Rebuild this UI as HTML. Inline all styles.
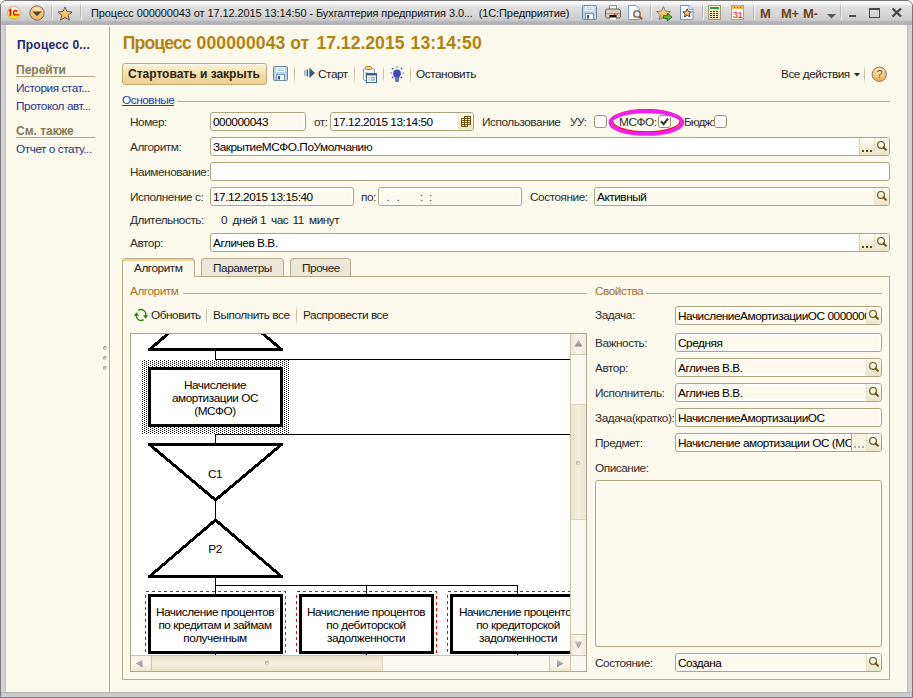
<!DOCTYPE html><html><head><meta charset="utf-8"><style>
*{margin:0;padding:0;box-sizing:border-box}
body{width:913px;height:698px;overflow:hidden;background:#fff;font-family:"Liberation Sans",sans-serif;font-size:11.8px;letter-spacing:-0.45px;color:#222;position:relative}
.a{position:absolute}
.t{position:absolute;white-space:pre;line-height:0;height:0}
.t span{display:inline-block;line-height:normal;transform:translateY(-0.905em) translateY(-0.5px)}
.f{position:absolute;border:1px solid #ada57e;border-radius:3px;background:#fff;height:19px;overflow:hidden}
.ro{background:#fbf9ec}
.fb{position:absolute;top:0;bottom:0;width:15px;background:linear-gradient(#fefdf6,#f4f0de 50%,#ebe5cb);border-left:1px solid #e6e0c6}
.sep{position:absolute;width:1px;background:linear-gradient(rgba(190,182,150,0),#c8c0a0 30%,#c8c0a0 70%,rgba(190,182,150,0))}
.cb{position:absolute;width:13px;height:13px;border:1px solid #9c9472;border-radius:3px;background:#fff}
</style></head><body><div style="position:absolute;left:0px;top:0px;width:913px;height:698px;background:#c9c9c9;border:1px solid #777;border-radius:6px 6px 0 0"></div><div style="position:absolute;left:1px;top:1px;width:911px;height:24px;background:linear-gradient(#fbfbfb,#f4f4f4 3px,#dfdfdf 6px,#d8d8d8 50%,#cbcbcb 80%,#b6b6ba 86%,#aeaeb2);border-radius:5px 5px 0 0"></div><div style="position:absolute;left:1px;top:25px;width:5px;height:667px;background:linear-gradient(90deg,#d9d9d9,#cfcfcf 70%,#b9b9b9)"></div><div style="position:absolute;left:907px;top:25px;width:5px;height:667px;background:linear-gradient(90deg,#b3b3b3,#cfcfcf 30%,#d6d6d6)"></div><div style="position:absolute;left:1px;top:692px;width:911px;height:5px;background:linear-gradient(#b3b3b3,#c9c9c9 40%,#d3d3d3)"></div><div style="position:absolute;left:6px;top:25px;width:901px;height:667px;background:#fbf9ec"></div><div class="t" style="left:91px;top:17px;font-size:11px;color:#111;letter-spacing:-0.1px"><span>Процесс 000000043 от 17.12.2015 13:14:50 - Бухгалтерия предприятия 3.0...  (1С:Предприятие)</span></div><div class="t" style="left:17px;top:49px;font-weight:bold;font-size:12px;letter-spacing:0.2px;color:#1c2472"><span>Процесс 0...</span></div><div class="t" style="left:16px;top:74px;font-weight:bold;font-size:12px;letter-spacing:0;color:#857a58"><span>Перейти</span></div><div style="position:absolute;left:16px;top:76px;width:79px;height:1px;background:#aea57f"></div><div class="t" style="left:16px;top:92px;color:#28348a"><span>История стат...</span></div><div class="t" style="left:16px;top:110px;color:#28348a"><span>Протокол авт...</span></div><div class="t" style="left:16px;top:135px;font-weight:bold;font-size:12px;letter-spacing:0;color:#857a58"><span>См. также</span></div><div style="position:absolute;left:16px;top:137px;width:79px;height:1px;background:#aea57f"></div><div class="t" style="left:16px;top:152.5px;color:#28348a"><span>Отчет о стату...</span></div><div style="position:absolute;left:109px;top:27px;width:1px;height:665px;background:#b5ad8a"></div><div style="position:absolute;left:103px;top:346px;width:4px;height:4px;border-radius:50%;background:radial-gradient(circle at 65% 65%,#f6f3e4 0,#c9c2a4 35%,#8f8866 75%)"></div><div style="position:absolute;left:103px;top:356px;width:4px;height:4px;border-radius:50%;background:radial-gradient(circle at 65% 65%,#f6f3e4 0,#c9c2a4 35%,#8f8866 75%)"></div><div style="position:absolute;left:103px;top:366px;width:4px;height:4px;border-radius:50%;background:radial-gradient(circle at 65% 65%,#f6f3e4 0,#c9c2a4 35%,#8f8866 75%)"></div><div class="t" style="left:122.7px;top:49px;font-weight:bold;font-size:17.6px;letter-spacing:-0.85px;color:#b3820e"><span>Процесс</span></div><div class="t" style="left:196.5px;top:49px;font-weight:bold;font-size:17.6px;letter-spacing:0.1px;color:#b3820e"><span>000000043</span></div><div class="t" style="left:290.2px;top:49px;font-weight:bold;font-size:17.6px;letter-spacing:0px;color:#b3820e"><span>от</span></div><div class="t" style="left:316.4px;top:49px;font-weight:bold;font-size:17.6px;letter-spacing:0px;color:#b3820e"><span>17.12.2015</span></div><div class="t" style="left:410.6px;top:49px;font-weight:bold;font-size:17.6px;letter-spacing:0.1px;color:#b3820e"><span>13:14:50</span></div><div style="position:absolute;left:122px;top:63px;width:145px;height:22px;border:1px solid #c9a86a;border-radius:3px;background:linear-gradient(#fdf3d8,#f3dfae 50%,#ecd095);box-shadow:inset 0 1px 0 #fffaf0"></div><div class="t" style="left:128px;top:78px;font-weight:bold;font-size:12px;letter-spacing:0;color:#2b2210"><span>Стартовать и закрыть</span></div><div class="t" style="left:318px;top:78px;color:#222"><span>Старт</span></div><div class="t" style="left:416px;top:78px;color:#222"><span>Остановить</span></div><div class="t" style="left:781px;top:78px;color:#222"><span>Все действия</span></div><div class="sep" style="left:294px;top:65px;height:18px"></div><div class="sep" style="left:354px;top:65px;height:18px"></div><div class="sep" style="left:383px;top:65px;height:18px"></div><div class="sep" style="left:410px;top:65px;height:18px"></div><div class="sep" style="left:864px;top:65px;height:18px"></div><div class="t" style="left:122px;top:104px;color:#2535b0"><span>Основные</span></div><div style="position:absolute;left:122px;top:105px;width:52px;height:1px;background:#2535b0"></div><div style="position:absolute;left:177px;top:101px;width:713px;height:1px;background:#b5ad8a"></div><div class="t" style="left:130px;top:126px;color:#2c2c2c"><span>Номер:</span></div><div class="f ro" style="left:210px;top:112px;width:96px;height:19px;box-shadow:inset 0 0 0 1px #fff,inset 0 0 0 2px rgba(255,255,255,.55);"><div class="t" style="left:2px;top:13px;color:#000;"><span>000000043</span></div></div><div class="t" style="left:314px;top:126px;color:#2c2c2c"><span>от:</span></div><div class="f" style="left:330px;top:112px;width:144px;height:19px;"><div class="t" style="left:2px;top:13px;color:#000;"><span>17.12.2015 13:14:50</span></div><div class="fb" style="left:127px"><svg class="a" style="left:2px;top:3px;" width="10" height="11" viewBox="0 0 10 11"><path d="M3 0 H10 V9 H7 V11 H0 V2 H3 Z" fill="#6e5010"/><rect x="4" y="1" width="2" height="1" fill="#fff"/><rect x="7" y="1" width="2" height="1" fill="#fff"/><rect x="1" y="3" width="2" height="1" fill="#fff"/><rect x="4" y="3" width="2" height="1" fill="#fff"/><rect x="7" y="3" width="2" height="1" fill="#fff"/><rect x="1" y="5" width="2" height="1" fill="#fff"/><rect x="4" y="5" width="2" height="1" fill="#fff"/><rect x="7" y="5" width="2" height="1" fill="#fff"/><rect x="1" y="7" width="2" height="1" fill="#fff"/><rect x="4" y="7" width="2" height="1" fill="#fff"/><rect x="7" y="7" width="2" height="1" fill="#fff"/><rect x="1" y="9" width="2" height="1" fill="#fff"/><rect x="4" y="9" width="2" height="1" fill="#fff"/></svg></div></div><div class="t" style="left:482px;top:126px;color:#2c2c2c"><span>Использование</span></div><div class="t" style="left:570px;top:126px;color:#2c2c2c"><span>УУ:</span></div><div class="cb" style="left:594px;top:115px"></div><div class="t" style="left:619px;top:126px;color:#2c2c2c"><span>МСФО:</span></div><div class="cb" style="left:658px;top:115px"></div><svg class="a" style="left:658px;top:115px;" width="13" height="13" viewBox="0 0 13 13"><path d="M3 6.3 L5.6 9.2 L10 3.6" fill="none" stroke="#333" stroke-width="2.1"/></svg><div class="t" style="left:684px;top:126px;color:#2c2c2c;letter-spacing:-0.9px"><span>Бюдж:</span></div><div class="cb" style="left:714px;top:115px"></div><svg class="a" style="left:606px;top:106px;" width="82" height="32" viewBox="0 0 82 32"><ellipse cx="40.4" cy="14.8" rx="33.9" ry="11.2" fill="none" stroke="#ff0000" stroke-width="1.4"/><ellipse cx="40.4" cy="16.6" rx="36" ry="11.3" fill="none" stroke="#ee20ee" stroke-width="3.9"/></svg><div class="t" style="left:130px;top:151px;color:#2c2c2c"><span>Алгоритм:</span></div><div class="f" style="left:210px;top:137px;width:680px;height:19px;"><div class="t" style="left:2px;top:13px;color:#000;"><span>ЗакрытиеМСФО.ПоУмолчанию</span></div><div class="fb" style="left:663px"><svg class="a" style="left:-1px;top:0px;" width="15" height="17" viewBox="0 0 15 17"><circle cx="7" cy="6.9" r="3.4" fill="none" stroke="#6a5212" stroke-width="1.15"/><path d="M9.5 9.4 L11.9 11.8" stroke="#6a5212" stroke-width="2" stroke-linecap="round"/></svg></div><div class="fb" style="left:648px;border-left-color:#d6cfad"><svg class="a" style="left:-1px;top:0px;" width="15" height="17" viewBox="0 0 15 17"><rect x="3" y="12" width="2" height="2" fill="#5a4412"/><rect x="7" y="12" width="2" height="2" fill="#5a4412"/><rect x="11" y="12" width="2" height="2" fill="#5a4412"/></svg></div></div><div class="t" style="left:130px;top:176px;color:#2c2c2c"><span>Наименование:</span></div><div class="f" style="left:210px;top:162px;width:680px;height:19px;"></div><div class="t" style="left:130px;top:201px;color:#2c2c2c"><span>Исполнение с:</span></div><div class="f ro" style="left:210px;top:187px;width:144px;height:19px;box-shadow:inset 0 0 0 1px #fff,inset 0 0 0 2px rgba(255,255,255,.55);"><div class="t" style="left:2px;top:13px;color:#000;"><span>17.12.2015 13:15:40</span></div></div><div class="t" style="left:361px;top:201px;color:#2c2c2c"><span>по:</span></div><div class="f ro" style="left:378px;top:187px;width:144px;height:19px;box-shadow:inset 0 0 0 1px #fff,inset 0 0 0 2px rgba(255,255,255,.55);"></div><div class="t" style="left:386.5px;top:201px;color:#444"><span>.</span></div><div class="t" style="left:396.5px;top:201px;color:#444"><span>.</span></div><div class="t" style="left:420px;top:201px;color:#444"><span>:</span></div><div class="t" style="left:429px;top:201px;color:#444"><span>:</span></div><div class="t" style="left:530px;top:201px;color:#2c2c2c"><span>Состояние:</span></div><div class="f ro" style="left:594px;top:187px;width:296px;height:19px;box-shadow:inset 0 0 0 1px #fff,inset 0 0 0 2px rgba(255,255,255,.55);"><div class="t" style="left:2px;top:13px;color:#000;"><span>Активный</span></div><div class="fb" style="left:279px"><svg class="a" style="left:-1px;top:0px;" width="15" height="17" viewBox="0 0 15 17"><circle cx="7" cy="6.9" r="3.4" fill="none" stroke="#6a5212" stroke-width="1.15"/><path d="M9.5 9.4 L11.9 11.8" stroke="#6a5212" stroke-width="2" stroke-linecap="round"/></svg></div></div><div class="t" style="left:130px;top:224px;color:#2c2c2c"><span>Длительность:</span></div><div class="t" style="left:221px;top:224px;color:#222"><span>0</span></div><div class="t" style="left:232.5px;top:224px;color:#222"><span>дней</span></div><div class="t" style="left:260px;top:224px;color:#222"><span>1</span></div><div class="t" style="left:271px;top:224px;color:#222"><span>час</span></div><div class="t" style="left:292.5px;top:224px;color:#222"><span>11</span></div><div class="t" style="left:309px;top:224px;color:#222"><span>минут</span></div><div class="t" style="left:130px;top:247px;color:#2c2c2c"><span>Автор:</span></div><div class="f" style="left:210px;top:233px;width:680px;height:19px;"><div class="t" style="left:2px;top:13px;color:#000;"><span>Агличев В.В.</span></div><div class="fb" style="left:663px"><svg class="a" style="left:-1px;top:0px;" width="15" height="17" viewBox="0 0 15 17"><circle cx="7" cy="6.9" r="3.4" fill="none" stroke="#6a5212" stroke-width="1.15"/><path d="M9.5 9.4 L11.9 11.8" stroke="#6a5212" stroke-width="2" stroke-linecap="round"/></svg></div><div class="fb" style="left:648px;border-left-color:#d6cfad"><svg class="a" style="left:-1px;top:0px;" width="15" height="17" viewBox="0 0 15 17"><rect x="3" y="12" width="2" height="2" fill="#5a4412"/><rect x="7" y="12" width="2" height="2" fill="#5a4412"/><rect x="11" y="12" width="2" height="2" fill="#5a4412"/></svg></div></div><div style="position:absolute;left:122px;top:276px;width:768px;height:404px;border:1px solid #b5ad8a;background:#fbf9ec"></div><div style="position:absolute;left:201px;top:258px;width:83px;height:18px;border:1px solid #b5ad8a;border-bottom:none;border-radius:4px 4px 0 0;background:#ebe8da"></div><div style="position:absolute;left:290px;top:258px;width:61px;height:18px;border:1px solid #b5ad8a;border-bottom:none;border-radius:4px 4px 0 0;background:#ebe8da"></div><div style="position:absolute;left:122px;top:258px;width:73px;height:19px;border:1px solid #b5ad8a;border-bottom:none;border-radius:4px 4px 0 0;background:#fbf9ec;box-shadow:inset 0 2px 0 #f9d190"></div><div class="t" style="left:134px;top:271.5px;color:#222"><span>Алгоритм</span></div><div class="t" style="left:213px;top:271.5px;color:#222"><span>Параметры</span></div><div class="t" style="left:302px;top:271.5px;color:#222"><span>Прочее</span></div><div class="t" style="left:130px;top:294.5px;color:#a8722a"><span>Алгоритм</span></div><div style="position:absolute;left:183px;top:293px;width:404px;height:1px;background:#b5ad8a"></div><div class="t" style="left:595px;top:294.5px;color:#a8722a"><span>Свойства</span></div><div style="position:absolute;left:646px;top:293px;width:236px;height:1px;background:#b5ad8a"></div><svg class="a" style="left:132px;top:308px;" width="17" height="14" viewBox="0 0 17 14"><g fill="none" stroke="#2e7d12" stroke-width="1.4"><path d="M6.4 2.6 A4.6 4.6 0 0 1 13.6 7.6"/><path d="M4.4 7.2 A4.6 4.6 0 0 0 11.6 11.6"/></g><path d="M10.9 7.2 L16.3 7.2 L13.6 10.8 Z" fill="#2e7d12"/><path d="M1.7 7.8 L7.1 7.8 L4.4 4.2 Z" fill="#2e7d12"/></svg><div class="t" style="left:151px;top:318.5px;color:#222"><span>Обновить</span></div><div class="t" style="left:213px;top:318.5px;color:#222"><span>Выполнить все</span></div><div class="t" style="left:303px;top:318.5px;color:#222"><span>Распровести все</span></div><div class="sep" style="left:206px;top:306px;height:18px"></div><div class="sep" style="left:296px;top:306px;height:18px"></div><div style="position:absolute;left:130px;top:333px;width:457px;height:339px;border:1px solid #aca68a;background:#fff"></div><svg class="a" style="left:131px;top:334px" width="439" height="321" viewBox="0 0 439 321" shape-rendering="crispEdges"><defs><pattern id="dith" width="4" height="2" patternUnits="userSpaceOnUse"><rect width="4" height="2" fill="#fff"/><rect x="1" y="0" width="1" height="1" fill="#000"/><rect x="3" y="1" width="1" height="1" fill="#000"/></pattern></defs><rect x="17" y="14" width="135" height="3" fill="#000"/><path d="M18.5 15.5 L84.5 -40.5" fill="none" stroke="#000" stroke-width="3" stroke-linejoin="miter" stroke-miterlimit="4"/><path d="M150.5 15.5 L84.5 -40.5" fill="none" stroke="#000" stroke-width="3" stroke-linejoin="miter" stroke-miterlimit="4"/><rect x="84" y="17" width="1" height="8" fill="#000"/><rect x="84" y="25" width="356" height="1" fill="#000"/><rect x="11" y="26" width="147" height="74" fill="url(#dith)"/><rect x="17" y="33" width="135" height="60" fill="#000"/><rect x="20" y="36" width="129" height="54" fill="#fff"/><rect x="84" y="100" width="356" height="1" fill="#000"/><rect x="84" y="100" width="1" height="9" fill="#000"/><rect x="17" y="109" width="135" height="3" fill="#000"/><path d="M18.5 110.5 L84.5 166 L150.5 110.5" fill="none" stroke="#000" stroke-width="3" stroke-linejoin="miter" stroke-miterlimit="4"/><rect x="84" y="168" width="1" height="16" fill="#000"/><rect x="17" y="241" width="135" height="3" fill="#000"/><path d="M18.5 242.5 L84.5 186 L150.5 242.5" fill="none" stroke="#000" stroke-width="3" stroke-linejoin="miter" stroke-miterlimit="4"/><rect x="84" y="244" width="1" height="16" fill="#000"/><rect x="84" y="251" width="303" height="1" fill="#000"/><rect x="84" y="251" width="1" height="9" fill="#000"/><rect x="14.5" y="257.5" width="140" height="70" fill="none" stroke="#ff0000" stroke-width="1" stroke-dasharray="3 3"/><rect x="17" y="260" width="135" height="60" fill="#000"/><rect x="20" y="263" width="129" height="54" fill="#fff"/><rect x="84" y="320" width="1" height="6" fill="#000"/><rect x="235" y="251" width="1" height="9" fill="#000"/><rect x="165.5" y="257.5" width="140" height="70" fill="none" stroke="#ff0000" stroke-width="1" stroke-dasharray="3 3"/><rect x="168" y="260" width="135" height="60" fill="#000"/><rect x="171" y="263" width="129" height="54" fill="#fff"/><rect x="235" y="320" width="1" height="6" fill="#000"/><rect x="386" y="251" width="1" height="9" fill="#000"/><rect x="316.5" y="257.5" width="140" height="70" fill="none" stroke="#ff0000" stroke-width="1" stroke-dasharray="3 3"/><rect x="319" y="260" width="135" height="60" fill="#000"/><rect x="322" y="263" width="129" height="54" fill="#fff"/><rect x="386" y="320" width="1" height="6" fill="#000"/></svg><div class="t" style="left:115px;top:389px;width:200px;text-align:center;color:#000"><span>Начисление</span></div><div class="t" style="left:115px;top:402px;width:200px;text-align:center;color:#000"><span>амортизации ОС</span></div><div class="t" style="left:115px;top:415px;width:200px;text-align:center;color:#000"><span>(МСФО)</span></div><div class="t" style="left:115px;top:478px;width:200px;text-align:center;color:#000"><span>С1</span></div><div class="t" style="left:115px;top:552.5px;width:200px;text-align:center;color:#000"><span>Р2</span></div><div class="t" style="left:115px;top:616px;width:200px;text-align:center;color:#000"><span>Начисление процентов</span></div><div class="t" style="left:115px;top:629px;width:200px;text-align:center;color:#000"><span>по кредитам и займам</span></div><div class="t" style="left:115px;top:642px;width:200px;text-align:center;color:#000"><span>полученным</span></div><div class="t" style="left:266px;top:616px;width:200px;text-align:center;color:#000"><span>Начисление процентов</span></div><div class="t" style="left:266px;top:629px;width:200px;text-align:center;color:#000"><span>по дебиторской</span></div><div class="t" style="left:266px;top:642px;width:200px;text-align:center;color:#000"><span>задолженности</span></div><div class="a" style="left:131px;top:590px;width:439px;height:65px;overflow:hidden"><div class="t" style="left:287px;top:26px;width:200px;text-align:center;color:#000"><span>Начисление процентов</span></div><div class="t" style="left:287px;top:39px;width:200px;text-align:center;color:#000"><span>по кредиторской</span></div><div class="t" style="left:287px;top:52px;width:200px;text-align:center;color:#000"><span>задолженности</span></div></div><div style="position:absolute;left:570px;top:334px;width:16px;height:321px;background:#f9f8f1;border-left:1px solid #cdc6a6"></div><div style="position:absolute;left:570px;top:334px;width:16px;height:21px;background:linear-gradient(90deg,#eee9d6,#f8f6ec 55%,#efead6);border-left:1px solid #cdc6a6;border-bottom:1px solid #cdc6a6"></div><svg class="a" style="left:574px;top:339px;" width="9" height="8" viewBox="0 0 9 8"><defs><linearGradient id="gar" x1="0" y1="0" x2="0" y2="1"><stop offset="0" stop-color="#c4c4c0"/><stop offset="1" stop-color="#8c8c88"/></linearGradient></defs><path d="M0.5 7.5 L4.5 0.5 L8.5 7.5 Z" fill="url(#gar)"/></svg><div style="position:absolute;left:570px;top:404px;width:16px;height:116px;background:linear-gradient(90deg,#e8e2c6,#f2eedc 50%,#ebe6ce);border-left:1px solid #cdc6a6;border-top:1px solid #ddd6bc;border-bottom:1px solid #ddd6bc"></div><div style="position:absolute;left:576px;top:461px;width:4px;height:4px;border-radius:50%;background:radial-gradient(circle at 60% 60%,#fff 0,#c8c2ac 40%,#9c9680 80%)"></div><div style="position:absolute;left:570px;top:634px;width:16px;height:21px;background:linear-gradient(90deg,#eee9d6,#f8f6ec 55%,#efead6);border-left:1px solid #cdc6a6;border-top:1px solid #cdc6a6"></div><svg class="a" style="left:574px;top:641px;" width="9" height="8" viewBox="0 0 9 8"><path d="M0.5 0.5 L4.5 7.5 L8.5 0.5 Z" fill="url(#gar)"/></svg><div style="position:absolute;left:131px;top:655px;width:439px;height:16px;background:#f9f8f1;border-top:1px solid #cdc6a6"></div><div style="position:absolute;left:131px;top:655px;width:21px;height:16px;background:linear-gradient(#f6f3e6,#f9f7ee 50%,#ece7d2);border-top:1px solid #cdc6a6;border-right:1px solid #cdc6a6"></div><svg class="a" style="left:135px;top:659px;" width="9" height="9" viewBox="0 0 9 9"><path d="M7.5 0.5 L0.8 4.5 L7.5 8.5 Z" fill="url(#gar)"/></svg><div style="position:absolute;left:152px;top:655px;width:231px;height:16px;background:linear-gradient(#e9e3c8,#f2eedc 50%,#eae4ca);border-top:1px solid #cdc6a6;border-right:1px solid #ddd6bc"></div><div style="position:absolute;left:265px;top:661px;width:4px;height:4px;border-radius:50%;background:radial-gradient(circle at 60% 60%,#fff 0,#c8c2ac 40%,#9c9680 80%)"></div><div style="position:absolute;left:549px;top:655px;width:21px;height:16px;background:linear-gradient(#f6f3e6,#f9f7ee 50%,#ece7d2);border-top:1px solid #cdc6a6;border-left:1px solid #cdc6a6"></div><svg class="a" style="left:556px;top:659px;" width="9" height="9" viewBox="0 0 9 9"><path d="M1 0.5 L7.7 4.5 L1 8.5 Z" fill="url(#gar)"/></svg><div style="position:absolute;left:570px;top:655px;width:16px;height:16px;background:#f8f7f0;border-top:1px solid #cdc6a6;border-left:1px solid #cdc6a6"></div><div class="t" style="left:595px;top:319px;color:#2c2c2c"><span>Задача:</span></div><div class="f ro" style="left:675px;top:306px;width:207px;height:19px;box-shadow:inset 0 0 0 1px #fff,inset 0 0 0 2px rgba(255,255,255,.55);"><div class="t" style="left:2px;top:13px;color:#000;"><span>НачислениеАмортизацииОС 000000001</span></div><div class="fb" style="left:190px"><svg class="a" style="left:-1px;top:0px;" width="15" height="17" viewBox="0 0 15 17"><circle cx="7" cy="6.9" r="3.4" fill="none" stroke="#6a5212" stroke-width="1.15"/><path d="M9.5 9.4 L11.9 11.8" stroke="#6a5212" stroke-width="2" stroke-linecap="round"/></svg></div></div><div class="t" style="left:595px;top:347px;color:#2c2c2c"><span>Важность:</span></div><div class="f ro" style="left:675px;top:333px;width:207px;height:19px;box-shadow:inset 0 0 0 1px #fff,inset 0 0 0 2px rgba(255,255,255,.55);"><div class="t" style="left:2px;top:13px;color:#000;"><span>Средняя</span></div></div><div class="t" style="left:595px;top:372px;color:#2c2c2c"><span>Автор:</span></div><div class="f ro" style="left:675px;top:358px;width:207px;height:19px;box-shadow:inset 0 0 0 1px #fff,inset 0 0 0 2px rgba(255,255,255,.55);"><div class="t" style="left:2px;top:13px;color:#000;"><span>Агличев В.В.</span></div><div class="fb" style="left:190px"><svg class="a" style="left:-1px;top:0px;" width="15" height="17" viewBox="0 0 15 17"><circle cx="7" cy="6.9" r="3.4" fill="none" stroke="#6a5212" stroke-width="1.15"/><path d="M9.5 9.4 L11.9 11.8" stroke="#6a5212" stroke-width="2" stroke-linecap="round"/></svg></div></div><div class="t" style="left:595px;top:397px;color:#2c2c2c"><span>Исполнитель:</span></div><div class="f ro" style="left:675px;top:383px;width:207px;height:19px;box-shadow:inset 0 0 0 1px #fff,inset 0 0 0 2px rgba(255,255,255,.55);"><div class="t" style="left:2px;top:13px;color:#000;"><span>Агличев В.В.</span></div><div class="fb" style="left:190px"><svg class="a" style="left:-1px;top:0px;" width="15" height="17" viewBox="0 0 15 17"><circle cx="7" cy="6.9" r="3.4" fill="none" stroke="#6a5212" stroke-width="1.15"/><path d="M9.5 9.4 L11.9 11.8" stroke="#6a5212" stroke-width="2" stroke-linecap="round"/></svg></div></div><div class="t" style="left:595px;top:422px;color:#2c2c2c"><span>Задача(кратко):</span></div><div class="f ro" style="left:675px;top:408px;width:207px;height:19px;box-shadow:inset 0 0 0 1px #fff,inset 0 0 0 2px rgba(255,255,255,.55);"><div class="t" style="left:2px;top:13px;color:#000;"><span>НачислениеАмортизацииОС</span></div></div><div class="t" style="left:595px;top:447px;color:#2c2c2c"><span>Предмет:</span></div><div class="f ro" style="left:675px;top:433px;width:207px;height:19px;box-shadow:inset 0 0 0 1px #fff,inset 0 0 0 2px rgba(255,255,255,.55);"><div class="t" style="left:2px;top:13px;color:#000;"><span>Начисление амортизации ОС (МСФО)</span></div><div class="fb" style="left:190px"><svg class="a" style="left:-1px;top:0px;" width="15" height="17" viewBox="0 0 15 17"><circle cx="7" cy="6.9" r="3.4" fill="none" stroke="#6a5212" stroke-width="1.15"/><path d="M9.5 9.4 L11.9 11.8" stroke="#6a5212" stroke-width="2" stroke-linecap="round"/></svg></div><div class="fb" style="left:175px;background:#f6f3e2;border-left:1px solid #ada57e"><svg class="a" style="left:-1px;top:0px;" width="15" height="17" viewBox="0 0 15 17"><rect x="3" y="12" width="2" height="2" fill="#b4b0a2"/><rect x="7" y="12" width="2" height="2" fill="#b4b0a2"/><rect x="11" y="12" width="2" height="2" fill="#b4b0a2"/></svg></div></div><div class="t" style="left:595px;top:472px;color:#2c2c2c"><span>Описание:</span></div><div style="position:absolute;left:595px;top:480px;width:287px;height:167px;border:1px solid #ada57e;border-radius:3px;background:#fbf9ec;box-shadow:inset 0 0 0 1px #fff"></div><div class="t" style="left:595px;top:667px;color:#2c2c2c"><span>Состояние:</span></div><div class="f ro" style="left:675px;top:653px;width:207px;height:19px;box-shadow:inset 0 0 0 1px #fff,inset 0 0 0 2px rgba(255,255,255,.55);"><div class="t" style="left:2px;top:13px;color:#000;"><span>Создана</span></div><div class="fb" style="left:190px"><svg class="a" style="left:-1px;top:0px;" width="15" height="17" viewBox="0 0 15 17"><circle cx="7" cy="6.9" r="3.4" fill="none" stroke="#6a5212" stroke-width="1.15"/><path d="M9.5 9.4 L11.9 11.8" stroke="#6a5212" stroke-width="2" stroke-linecap="round"/></svg></div></div><svg class="a" style="left:6px;top:5px;" width="16" height="16" viewBox="0 0 16 16"><defs><linearGradient id="g1c" x1="0" y1="0" x2="0" y2="1"><stop offset="0" stop-color="#fffbe8"/><stop offset="0.45" stop-color="#fff3a0"/><stop offset="0.65" stop-color="#ffe830"/><stop offset="1" stop-color="#f8dc00"/></linearGradient></defs><circle cx="7.9" cy="7.7" r="6.35" fill="url(#g1c)" stroke="#c8a080" stroke-width="0.9"/><path d="M3 6 L4.4 5 L4.4 10.8" fill="none" stroke="#e80000" stroke-width="1.7"/><path d="M11.2 6.6 C10.6 5.2 8.4 4.9 7.6 6.6 C7.2 7.6 7.6 9.6 8.6 9.9 L12.9 9.9" fill="none" stroke="#e80000" stroke-width="1.4"/></svg><svg class="a" style="left:29px;top:5px;" width="16" height="16" viewBox="0 0 16 16"><defs><radialGradient id="gdd" cx="0.5" cy="0.3" r="0.7"><stop offset="0" stop-color="#fde2b8"/><stop offset="1" stop-color="#f0a848"/></radialGradient></defs><circle cx="8" cy="8" r="7.2" fill="url(#gdd)" stroke="#6a6a78" stroke-width="0.9"/><path d="M3.4 6.6 L12.6 6.6 L8 11.2 Z" fill="#4e4430"/></svg><div style="position:absolute;left:51px;top:3px;width:1px;height:17px;background:linear-gradient(rgba(160,160,160,0),#b4b4b4 25%,#b4b4b4 75%,rgba(160,160,160,0));box-shadow:1px 0 0 rgba(255,255,255,.6)"></div><svg class="a" style="left:57px;top:5.6px;" width="16" height="16" viewBox="0 0 16 16"><defs><linearGradient id="gst" x1="0" y1="0" x2="0" y2="1"><stop offset="0" stop-color="#ffe8a0"/><stop offset="1" stop-color="#f4a53a"/></linearGradient></defs><path d="M8 1 L10 5.6 L15 6 L11.2 9.2 L12.4 14.2 L8 11.5 L3.6 14.2 L4.8 9.2 L1 6 L6 5.6 Z" fill="url(#gst)" stroke="#5c5c5c" stroke-width="1" stroke-linejoin="round"/></svg><div style="position:absolute;left:80px;top:3px;width:1px;height:17px;background:linear-gradient(rgba(160,160,160,0),#b4b4b4 25%,#b4b4b4 75%,rgba(160,160,160,0));box-shadow:1px 0 0 rgba(255,255,255,.6)"></div><svg class="a" style="left:582px;top:5px;" width="15" height="15" viewBox="0 0 15 15"><rect x="0.5" y="0.5" width="14" height="14" rx="1" fill="#bcd4e8" stroke="#6585a4"/><rect x="3" y="1" width="9" height="5" fill="#f6f9fc"/><rect x="4" y="2.5" width="7" height="0.8" fill="#9cc0d8"/><rect x="4" y="4" width="7" height="0.8" fill="#9cc0d8"/><rect x="3.5" y="8.5" width="8" height="6" fill="#f2f4f6" stroke="#6585a4" stroke-width="0.8"/><rect x="5" y="10" width="2" height="3.5" fill="#40546a"/></svg><svg class="a" style="left:605px;top:5px;" width="17" height="16" viewBox="0 0 17 16"><rect x="4.5" y="0.5" width="7" height="5" fill="#f4f8fc" stroke="#8898a8"/><rect x="0.5" y="4" width="15" height="9" rx="2" fill="#ddcbbb" stroke="#6a5a50"/><rect x="1.5" y="8" width="13" height="1" fill="#b89880"/><rect x="9" y="8.4" width="1.4" height="1.4" fill="#e02020"/><rect x="11.4" y="8.4" width="1.4" height="1.4" fill="#30a030"/><rect x="4.5" y="10" width="7" height="2.6" fill="#111"/><rect x="5" y="12.6" width="6" height="2" fill="#fff"/></svg><svg class="a" style="left:628px;top:5px;" width="16" height="15" viewBox="0 0 16 15"><path d="M0.5 0.5 L8 0.5 L11 3.5 L11 14.5 L0.5 14.5 Z" fill="#f8fbff" stroke="#7c9cc8"/><circle cx="9" cy="9" r="3.2" fill="#dfeeff" stroke="#8a5a30" stroke-width="1.3"/><path d="M11.2 11.2 L14.2 14.2" stroke="#8a5a30" stroke-width="2"/></svg><div style="position:absolute;left:650px;top:3px;width:1px;height:17px;background:linear-gradient(rgba(160,160,160,0),#b4b4b4 25%,#b4b4b4 75%,rgba(160,160,160,0));box-shadow:1px 0 0 rgba(255,255,255,.6)"></div><svg class="a" style="left:655px;top:5px;" width="18" height="17" viewBox="0 0 18 17"><defs><linearGradient id="gst" x1="0" y1="0" x2="0" y2="1"><stop offset="0" stop-color="#ffe8a0"/><stop offset="1" stop-color="#f4a53a"/></linearGradient></defs><g transform="translate(0.5,0.6)"><path d="M8 1 L10 5.6 L15 6 L11.2 9.2 L12.4 14.2 L8 11.5 L3.6 14.2 L4.8 9.2 L1 6 L6 5.6 Z" fill="url(#gst)" stroke="#777" stroke-width="0.9" stroke-linejoin="round"/></g><path d="M8.5 10.6 L12.4 10.6 L12.4 8.2 L17 12.1 L12.4 16 L12.4 13.6 L8.5 13.6 Z" fill="#62b640" stroke="#2a6a1a" stroke-width="0.9"/></svg><svg class="a" style="left:680px;top:5px;" width="14" height="16" viewBox="0 0 14 16"><defs><linearGradient id="gst" x1="0" y1="0" x2="0" y2="1"><stop offset="0" stop-color="#ffe8a0"/><stop offset="1" stop-color="#f4a53a"/></linearGradient></defs><path d="M0.5 0.5 L9 0.5 L13 4.5 L13 14.5 L0.5 14.5 Z" fill="#fbfcfe" stroke="#6f8fc0"/><path d="M9 0.5 L9 4.5 L13 4.5" fill="#e8eef8" stroke="#6f8fc0" stroke-width="0.8"/><g transform="translate(2.2,3.2) scale(0.62)"><path d="M8 1 L10 5.6 L15 6 L11.2 9.2 L12.4 14.2 L8 11.5 L3.6 14.2 L4.8 9.2 L1 6 L6 5.6 Z" fill="url(#gst)" stroke="#444" stroke-width="1.6" stroke-linejoin="round"/></g></svg><div style="position:absolute;left:702px;top:3px;width:1px;height:17px;background:linear-gradient(rgba(160,160,160,0),#b4b4b4 25%,#b4b4b4 75%,rgba(160,160,160,0));box-shadow:1px 0 0 rgba(255,255,255,.6)"></div><svg class="a" style="left:708px;top:5px;shape-rendering:crispEdges" width="13" height="15" viewBox="0 0 13 15"><defs><linearGradient id="gcalc" x1="0" y1="0" x2="0" y2="1"><stop offset="0" stop-color="#fdf4dc"/><stop offset="1" stop-color="#efd9a8"/></linearGradient></defs><rect x="0.5" y="0.5" width="12" height="14" rx="1" fill="url(#gcalc)" stroke="#a89878"/><rect x="2" y="2" width="9" height="2" fill="#2f9a3a"/><rect x="2" y="6" width="2" height="1" fill="#3a3a3a"/><rect x="2" y="8" width="2" height="1" fill="#3a3a3a"/><rect x="2" y="10" width="2" height="1" fill="#3a3a3a"/><rect x="2" y="12" width="2" height="1" fill="#3a3a3a"/><rect x="5" y="6" width="2" height="1" fill="#3a3a3a"/><rect x="5" y="8" width="2" height="1" fill="#3a3a3a"/><rect x="5" y="10" width="2" height="1" fill="#3a3a3a"/><rect x="5" y="12" width="2" height="1" fill="#3a3a3a"/><rect x="8" y="6" width="2" height="1" fill="#3a3a3a"/><rect x="8" y="8" width="2" height="1" fill="#3a3a3a"/><rect x="8" y="10" width="2" height="1" fill="#3a3a3a"/><rect x="8" y="12" width="2" height="1" fill="#3a3a3a"/><rect x="8" y="6" width="2" height="1" fill="#e02020"/></svg><svg class="a" style="left:731px;top:5px;" width="13" height="15" viewBox="0 0 13 15"><rect x="0.5" y="0.5" width="12" height="14" fill="#fdf6e8" stroke="#b8a080"/><rect x="1" y="1" width="11" height="3" fill="#f2b860"/><rect x="3" y="2" width="1" height="1" fill="#6a4a20"/><rect x="6" y="2" width="1" height="1" fill="#6a4a20"/><rect x="9" y="2" width="1" height="1" fill="#6a4a20"/><text x="6.6" y="13.2" font-family="Liberation Sans" font-size="9.5" letter-spacing="-0.5" text-anchor="middle" fill="#e02010">31</text></svg><div style="position:absolute;left:753px;top:3px;width:1px;height:17px;background:linear-gradient(rgba(160,160,160,0),#b4b4b4 25%,#b4b4b4 75%,rgba(160,160,160,0));box-shadow:1px 0 0 rgba(255,255,255,.6)"></div><div class="t" style="left:760px;top:17.5px;font-weight:bold;font-size:13px;letter-spacing:-0.3px;color:#6e4218"><span>M</span></div><div class="t" style="left:781px;top:17.5px;font-weight:bold;font-size:13px;letter-spacing:-0.3px;color:#6e4218"><span>M+</span></div><div class="t" style="left:803px;top:17.5px;font-weight:bold;font-size:13px;letter-spacing:-0.3px;color:#6e4218"><span>M-</span></div><svg class="a" style="left:827px;top:14px;" width="9" height="5" viewBox="0 0 9 5"><path d="M0 0 L9 0 L4.5 4.5 Z" fill="#555"/></svg><div style="position:absolute;left:840px;top:3px;width:1px;height:17px;background:linear-gradient(rgba(160,160,160,0),#b4b4b4 25%,#b4b4b4 75%,rgba(160,160,160,0));box-shadow:1px 0 0 rgba(255,255,255,.6)"></div><div style="position:absolute;left:849px;top:15px;width:7px;height:2px;background:#4a4a4a"></div><div style="position:absolute;left:869px;top:8px;width:11px;height:10px;border:1.5px solid #4a4a4a;border-top-width:2.5px"></div><svg class="a" style="left:891px;top:7px;" width="12" height="11" viewBox="0 0 12 11"><path d="M1.5 1.5 L10 9.5 M10 1.5 L1.5 9.5" stroke="#474747" stroke-width="2.3"/></svg><svg class="a" style="left:273px;top:66px;" width="15" height="15" viewBox="0 0 15 15"><rect x="0.5" y="0.5" width="14" height="14" rx="1" fill="#bcd4e8" stroke="#6585a4"/><rect x="3" y="1" width="9" height="5" fill="#f6f9fc"/><rect x="4" y="2.5" width="7" height="0.8" fill="#9cc0d8"/><rect x="4" y="4" width="7" height="0.8" fill="#9cc0d8"/><rect x="3.5" y="8.5" width="8" height="6" fill="#f2f4f6" stroke="#6585a4" stroke-width="0.8"/><rect x="5" y="10" width="2" height="3.5" fill="#40546a"/></svg><svg class="a" style="left:304px;top:67px;" width="12" height="12" viewBox="0 0 12 12"><rect x="0.4" y="3" width="1.1" height="5.8" fill="#4a70a0" opacity=".75"/><rect x="2.6" y="2.4" width="1.5" height="7" fill="#3d6496"/><path d="M5.4 0.8 L11 5.9 L5.4 11 Z" fill="#2f5a8e"/></svg><svg class="a" style="left:362px;top:65px;" width="16" height="18" viewBox="0 0 16 18"><rect x="1.5" y="3.5" width="11" height="12" rx="1.5" fill="#f4f6fa" stroke="#8f9db2"/><rect x="3.5" y="1.5" width="6" height="3" rx="1" fill="#f2da70" stroke="#a88a30"/><g fill="#a8b4c4"><rect x="3" y="7" width="2.5" height="0.9"/><rect x="3" y="9.2" width="2.5" height="0.9"/><rect x="3" y="11.4" width="2.5" height="0.9"/></g><rect x="4.5" y="8.5" width="10" height="9" fill="#fff" stroke="#3f5f88"/><rect x="4.5" y="8.5" width="10" height="2" fill="#3f5f88"/><g fill="#5a7aa8"><rect x="6.5" y="12.3" width="1" height="1"/><rect x="8.5" y="12.3" width="4.5" height="1"/><rect x="6.5" y="14.5" width="1" height="1"/><rect x="8.5" y="14.5" width="4.5" height="1"/></g></svg><svg class="a" style="left:389px;top:65px;" width="17" height="18" viewBox="0 0 17 18"><g fill="#3a4ab8"><rect x="7.3" y="1.3" width="1.5" height="1.5" opacity=".7"/><circle cx="3.6" cy="3.6" r="0.9"/><circle cx="12.5" cy="3.6" r="0.9"/><rect x="1" y="7.6" width="2" height="1" opacity=".7"/><rect x="13.2" y="7.6" width="2" height="1" opacity=".7"/><circle cx="3.6" cy="12.4" r="0.9"/><circle cx="12.5" cy="12.4" r="0.9"/><circle cx="8" cy="8.4" r="3.9"/><path d="M5.6 11 L10.4 11 L9.8 16.4 L6.2 16.4 Z" opacity=".75"/><rect x="6.8" y="15.6" width="2.4" height="1.2"/></g></svg><svg class="a" style="left:854px;top:72.8px;" width="6" height="4" viewBox="0 0 6 4"><path d="M0 0 L6 0 L3 3.4 Z" fill="#2e2410"/></svg><svg class="a" style="left:870.5px;top:65.5px;" width="17" height="17" viewBox="0 0 17 17"><defs><radialGradient id="ghelp" cx="0.5" cy="0.3" r="0.75"><stop offset="0" stop-color="#fff2dc"/><stop offset="0.6" stop-color="#f6bf6a"/><stop offset="1" stop-color="#eca03a"/></radialGradient></defs><circle cx="8.3" cy="8.3" r="7.2" fill="url(#ghelp)" stroke="#7c7888" stroke-width="0.9"/><text x="8.3" y="12.3" font-family="Liberation Sans" font-size="11" text-anchor="middle" fill="#7a4a26">?</text></svg></body></html>
